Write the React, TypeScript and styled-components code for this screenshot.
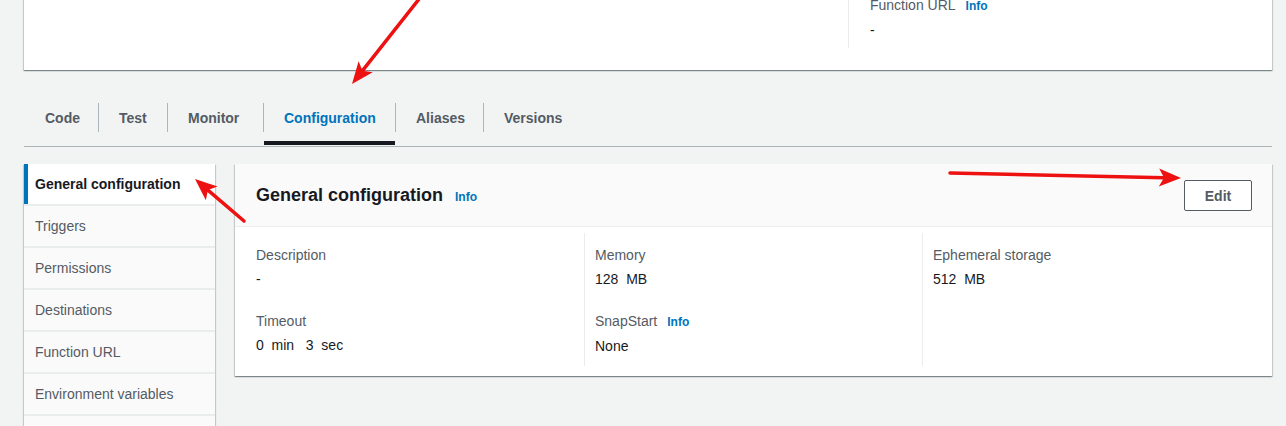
import styled, { createGlobalStyle } from 'styled-components';

const GlobalStyle = createGlobalStyle`
  body {
    margin: 0;
    background: #f2f3f3;
    font-family: "Liberation Sans", Arial, sans-serif;
    font-size: 14px;
    color: #16191f;
    overflow: hidden;
  }
`;

const cardShadow = '0 1px 1px 0 rgba(0, 28, 36, 0.3), 1px 1px 1px 0 rgba(0, 28, 36, 0.15), -1px 1px 1px 0 rgba(0, 28, 36, 0.15)';

const Page = styled.div`
  position: relative;
  padding: 0 14px 0 24px;
`;

const TopCard = styled.div`
  margin-top: -20px;
  height: 90px;
  background: #fff;
  box-shadow: ${cardShadow};
  display: flex;
  justify-content: flex-end;
`;

const TopColumn = styled.div`
  width: 402px;
  height: 46px;
  padding: 14px 0 8px 21px;
  border-left: 1px solid #eaeded;
`;

const FieldLabel = styled.div`
  line-height: 22px;
  color: #545b64;
`;

const FieldValue = styled.div`
  line-height: 22px;
  margin-top: 2px;
  color: #16191f;
  white-space: pre;
`;

const InfoLink = styled.a<{ $gap?: number }>`
  margin-left: ${p => p.$gap ?? 10}px;
  font-size: 12px;
  font-weight: 700;
  color: #0073bb;
  text-decoration: none;
`;

const Tabs = styled.div`
  margin-top: 20px;
  display: flex;
  border-bottom: 1px solid #aab7b8;
`;

const Tab = styled.div<{ $active?: boolean; $first?: boolean; $width: number }>`
  position: relative;
  box-sizing: border-box;
  width: ${p => p.$width}px;
  height: 56px;
  display: flex;
  align-items: center;
  padding-left: ${p => (p.$first ? 21 : 20)}px;
  font-weight: 700;
  color: ${p => (p.$active ? '#0073bb' : '#545b64')};
  white-space: nowrap;

  &::before {
    content: '';
    display: ${p => (p.$first ? 'none' : 'block')};
    position: absolute;
    left: -1px;
    top: 13px;
    height: 29px;
    width: 1px;
    background: #aab7b8;
  }

  &::after {
    content: '';
    display: ${p => (p.$active ? 'block' : 'none')};
    position: absolute;
    left: 0;
    right: 0;
    bottom: 1px;
    height: 4px;
    background: #16191f;
  }

  & + & {
    margin-left: 1px;
  }
`;

const Content = styled.div`
  margin-top: 17px;
  display: grid;
  grid-template-columns: 191px 1fr;
  column-gap: 20px;
  align-items: start;
`;

const Nav = styled.nav`
  background: #fafafa;
  box-shadow: ${cardShadow};
`;

const NavItem = styled.div<{ $active?: boolean }>`
  height: 40px;
  line-height: 40px;
  padding-left: 11px;
  border-bottom: 2px solid #eaeded;
  background: ${p => (p.$active ? '#fff' : '#fafafa')};
  box-shadow: ${p => (p.$active ? 'inset 4px 0 0 #0073bb' : 'none')};
  font-weight: ${p => (p.$active ? 700 : 400)};
  color: ${p => (p.$active ? '#16191f' : '#545b64')};
  white-space: nowrap;
`;

const Panel = styled.section`
  background: #fff;
  box-shadow: ${cardShadow};
`;

const PanelHeader = styled.header`
  height: 62px;
  display: flex;
  align-items: center;
  justify-content: space-between;
  padding: 0 20px 0 21px;
  background: #fafafa;
  border-bottom: 1px solid #eaeded;
`;

const Title = styled.h2`
  margin: 0;
  font-size: 18px;
  font-weight: 700;
  color: #16191f;
  display: flex;
  align-items: baseline;
`;

const EditButton = styled.button`
  width: 68px;
  height: 31px;
  margin-top: 1px;
  background: #fff;
  border: 1px solid #545b64;
  border-radius: 2px;
  font-family: inherit;
  font-size: 14px;
  font-weight: 700;
  color: #545b64;
`;

const PanelBody = styled.div`
  display: grid;
  grid-template-columns: 328px 338px 1fr;
  padding: 6px 20px 10px 21px;
`;

const Column = styled.div<{ $divided?: boolean }>`
  padding: 11px 0 9px ${p => (p.$divided ? 10 : 0)}px;
  border-left: ${p => (p.$divided ? '1px solid #eaeded' : 'none')};
  min-height: 112px;
`;

const Field = styled.div`
  & + & {
    margin-top: 20px;
  }
`;

const Arrows = styled.svg`
  position: absolute;
  left: 0;
  top: 0;
  pointer-events: none;
`;

type Pt = [number, number];

const Arrow = ({ from, to, head = 22, half = 9, width = 3.5 }: { from: Pt; to: Pt; head?: number; half?: number; width?: number }) => {
  const dx = to[0] - from[0];
  const dy = to[1] - from[1];
  const len = Math.hypot(dx, dy);
  const ux = dx / len;
  const uy = dy / len;
  const bx = to[0] - ux * head;
  const by = to[1] - uy * head;
  const pts = [
    `${to[0]},${to[1]}`,
    `${bx - uy * half},${by + ux * half}`,
    `${bx + ux * 5},${by + uy * 5}`,
    `${bx + uy * half},${by - ux * half}`,
  ].join(' ');
  return (
    <g>
      <line x1={from[0]} y1={from[1]} x2={bx + ux * 5} y2={by + uy * 5} stroke="#ee1111" strokeWidth={width} strokeLinecap="round" />
      <polygon points={pts} fill="#ee1111" />
    </g>
  );
};

const navItems = [
  'General configuration',
  'Triggers',
  'Permissions',
  'Destinations',
  'Function URL',
  'Environment variables',
  'Tags',
  'VPC',
];

const tabs: { label: string; width: number }[] = [
  { label: 'Code', width: 74 },
  { label: 'Test', width: 68 },
  { label: 'Monitor', width: 95 },
  { label: 'Configuration', width: 131 },
  { label: 'Aliases', width: 87 },
  { label: 'Versions', width: 100 },
];

export default function App() {
  return (
    <>
      <GlobalStyle />
      <Page>
        <TopCard>
          <TopColumn>
            <FieldLabel>
              Function URL<InfoLink href="#">Info</InfoLink>
            </FieldLabel>
            <FieldValue>-</FieldValue>
          </TopColumn>
        </TopCard>

        <Tabs>
          {tabs.map((t, i) => (
            <Tab key={t.label} $width={t.width} $first={i === 0} $active={t.label === 'Configuration'}>
              {t.label}
            </Tab>
          ))}
        </Tabs>

        <Content>
          <Nav>
            {navItems.map((n, i) => (
              <NavItem key={n} $active={i === 0}>
                {n}
              </NavItem>
            ))}
          </Nav>

          <Panel>
            <PanelHeader>
              <Title>
                General configuration<InfoLink href="#" $gap={12}>Info</InfoLink>
              </Title>
              <EditButton>Edit</EditButton>
            </PanelHeader>
            <PanelBody>
              <Column>
                <Field>
                  <FieldLabel>Description</FieldLabel>
                  <FieldValue>-</FieldValue>
                </Field>
                <Field>
                  <FieldLabel>Timeout</FieldLabel>
                  <FieldValue>{'0  min   3  sec'}</FieldValue>
                </Field>
              </Column>
              <Column $divided>
                <Field>
                  <FieldLabel>Memory</FieldLabel>
                  <FieldValue>{'128  MB'}</FieldValue>
                </Field>
                <Field>
                  <FieldLabel>
                    SnapStart<InfoLink href="#">Info</InfoLink>
                  </FieldLabel>
                  <FieldValue>None</FieldValue>
                </Field>
              </Column>
              <Column $divided>
                <Field>
                  <FieldLabel>Ephemeral storage</FieldLabel>
                  <FieldValue>{'512  MB'}</FieldValue>
                </Field>
              </Column>
            </PanelBody>
          </Panel>
        </Content>

        <Arrows width={1286} height={426} viewBox="0 0 1286 426">
          <Arrow from={[423, 14]} to={[352, 104]} />
          <Arrow from={[244, 241]} to={[195, 199]} />
          <Arrow from={[950, 193]} to={[1181, 198]} />
        </Arrows>
      </Page>
    </>
  );
}
